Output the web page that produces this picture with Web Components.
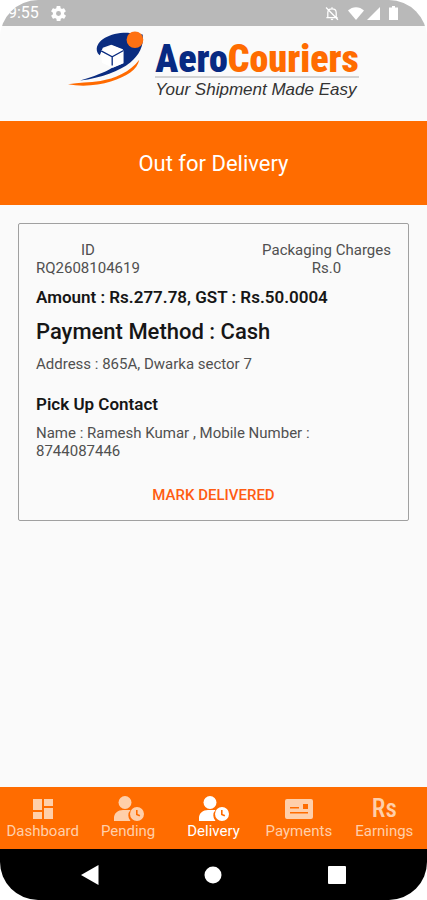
<!DOCTYPE html>
<html lang="en">
<head>
<meta charset="utf-8">
<meta name="viewport" content="width=device-width, initial-scale=1">
<title>AeroCouriers</title>
<style>
  :root {
    --color-accent: #ff6c00;
    --color-bg: #fafafa;
    --color-muted: #505050;
    --color-strong: #161616;
    --spacer: 18px;
  }
  body {
    margin: 0;
    background: #fff;
    font-family: Roboto, "Liberation Sans", sans-serif;
  }
</style>
</head>
<body>
<courier-app></courier-app>
<script>
(() => {
  const css = String.raw;
  const html = String.raw;

  const define = (name, styles, markup) => {
    const template = document.createElement("template");
    template.innerHTML = `<style>${styles}</style>${markup}`;
    customElements.define(name, class extends HTMLElement {
      constructor() {
        super();
        this.attachShadow({ mode: "open" }).appendChild(template.content.cloneNode(true));
      }
    });
  };

  // status bar
  define("status-bar", css`
:host {
  align-items: center;
  background: #b9b9b9;
  box-sizing: border-box;
  color: #fff;
  display: flex;
  font-size: 16px;
  height: 26px;
  justify-content: space-between;
  line-height: 28px;
  padding: 0 28px 0 8px;
}
div {
  align-items: center;
  display: flex;
  gap: 12px;
}
.right {
  gap: 3px;
}
.bell {
  margin-right: 6px;
}
svg {
  display: block;
  fill: currentColor;
}
`, html`
<div>
  <span>9:55</span>
  <svg width="15" height="15" viewBox="2 2 20 20"><path d="M19.4 13a7.5 7.5 0 0 0 0-2l2.1-1.6a.5.5 0 0 0 .1-.6l-2-3.5a.5.5 0 0 0-.6-.2l-2.500 1a7.300 7.300 0 0 0-1.700-1L14.500 2.400a.5.5 0 0 0-.5-.4h-4a.5.5 0 0 0-.5.4l-.4 2.700a7.700 7.700 0 0 0-1.700 1l-2.500-1a.5.5 0 0 0-.6.2l-2 3.500a.5.5 0 0 0 .1.6L4.600 11a8 8 0 0 0 0 2l-2.100 1.600a.5.5 0 0 0-.1.600l2 3.500c.1.200.4.3.6.2l2.500-1c.5.4 1.100.700 1.700 1l.4 2.700c0 .2.2.4.5.4h4c.2 0 .5-.2.500-.4l.4-2.700a7.300 7.300 0 0 0 1.700-1l2.500 1c.2.100.5 0 .6-.2l2-3.500a.5.5 0 0 0-.1-.6zM12 15.300a3.300 3.300 0 1 1 0-6.600 3.300 3.300 0 0 1 0 6.600z"/></svg>
</div>
<div class="right">
  <svg class="bell" width="14" height="15" viewBox="2 2 20 20"><path fill="none" stroke="#fff" stroke-width="1.8" d="M6 17V11c0-3 2.2-5.5 6-5.5s6 2.500 6 5.500v6M4 18h16M12 3v3M3.500 3.500l17 17.500"/><path d="M10 19.500h4a2 2 0 0 1-4 0z"/></svg>
  <svg width="16" height="13" viewBox="0 0 16 13"><path d="M0 3.500C4.500-1 11.500-1 16 3.500L8 13z"/></svg>
  <svg width="13" height="13" viewBox="0 0 13 13"><path d="M13 0v13H0z"/></svg>
  <svg width="16" height="14" viewBox="0 0 16 14"><path d="M9 0h3v1.500h3V14H6V1.500h3z"/></svg>
</div>
`);

  // brand mark, name and tag line
  define("brand-header", css`
:host {
  background: var(--color-bg);
  box-sizing: border-box;
  display: flex;
  gap: 10px;
  height: 95px;
  justify-content: center;
  padding: 4px 0 0;
}
svg {
  display: block;
  flex: none;
  height: 57px;
  width: 77px;
}
.words {
  padding-top: 4px;
}
.name {
  border-bottom: 2px solid #d3d3d3;
  color: #072a82;
  font-family: "Roboto Condensed", Roboto, sans-serif;
  font-size: 38px;
  font-weight: 900;
  height: 42px;
  line-height: 50px;
}
.name b {
  color: var(--color-accent);
  font-weight: 900;
}
.tag {
  color: #333;
  font-family: "Liberation Sans", sans-serif;
  font-size: 17px;
  font-style: italic;
  line-height: 24px;
}
`, html`
<svg viewBox="24 15 230 170" role="img" aria-label="AeroCouriers logo">
  <path fill="#0a2c80" d="M202 23C150 22 108 45 110 75c1 7 4 11 9 15l9-22 25-9 35 13-1 43-31 13c-22 14-55 26-96 38 64-8 118-28 150-54 25-21 42-50 37-84z"/>
  <path fill="#ff6a00" d="M237 104c-26 36-75 57-116 63-34 5-65 4-97 10 40 8 91 4 128-8 48-16 79-35 85-65z"/>
  <path fill="#fff" d="M123 76l34-15 33 14v39l-32 14-33-15z"/>
  <path fill="none" stroke="#0a2c80" stroke-width="4" d="M123 77l33 18 34-19M156 94v27"/>
  <circle cx="224" cy="44" r="25" fill="#ff7112"/>
</svg>
<div class="words">
  <div class="name">Aero<b>Couriers</b></div>
  <div class="tag">Your Shipment Made Easy</div>
</div>
`);

  define("page-banner", css`
:host {
  background: var(--color-accent);
  color: #fff;
  display: block;
  text-align: center;
}
h1 {
  font-size: 22px;
  font-weight: 400;
  line-height: 26px;
  margin: 0;
  padding: 30px var(--spacer) 28px;
}
`, html`<h1><slot></slot></h1>`);

  define("delivery-card", css`
:host {
  border: 1px solid #a0a0a0;
  border-radius: 2px;
  color: var(--color-muted);
  display: flex;
  flex-direction: column;
  font-size: 15px;
  gap: 8px;
  line-height: 18px;
  margin: var(--spacer);
  padding: 17px 17px 7px;
}
.top {
  display: flex;
  justify-content: space-between;
  text-align: center;
}
h2, h3, p {
  margin: 0;
}
h2, h3, .amount {
  color: var(--color-strong);
  font-weight: 500;
}
h2 {
  font-size: 22px;
  line-height: 30px;
}
h3, .amount {
  font-size: 17px;
  font-weight: 600;
  line-height: 24px;
}
h3 {
  margin-top: 11px;
}
button {
  align-self: center;
  background: none;
  border: 0;
  color: #ff5c12;
  font: 500 15px/36px Roboto, sans-serif;
  margin-top: 9px;
  padding: 0 8px;
  text-transform: uppercase;
}
`, html`
<div class="top">
  <div>ID<br><slot name="id"></slot></div>
  <div>Packaging Charges<br><slot name="charges"></slot></div>
</div>
<p class="amount"><slot name="amount"></slot></p>
<h2>Payment Method : <slot name="method"></slot></h2>
<p>Address : <slot name="address"></slot></p>
<h3>Pick Up Contact</h3>
<p><slot name="contact"></slot></p>
<button type="button">Mark Delivered</button>
`);

  define("tab-item", css`
:host {
  color: #ffcfaa;
  display: block;
}
:host([active]) {
  color: #fff;
}
a {
  align-items: center;
  color: inherit;
  display: flex;
  flex-direction: column;
  font-size: 15px;
  line-height: 20px;
  padding: 9px 0 8px;
  text-decoration: none;
}
.icon {
  align-items: center;
  display: flex;
  font-family: "Roboto Condensed", Roboto, sans-serif;
  font-size: 25px;
  font-weight: 500;
  height: 25px;
}
`, html`<a href="#"><span class="icon"><slot name="icon"></slot></span><slot></slot></a>`);

  define("tab-bar", css`
:host {
  background: var(--color-accent);
  display: grid;
  grid-template-columns: repeat(5, 1fr);
}
svg {
  display: block;
  fill: currentColor;
}
`, html`
<tab-item>
  <svg slot="icon" width="20" height="20" viewBox="0 0 20 20"><path d="M0 0h9v11H0zM11 0h9v7h-9zM0 13h9v7H0zM11 9h9v11h-9z"/></svg>
  Dashboard
</tab-item>
<tab-item>
  <svg slot="icon" width="32" height="25" viewBox="-2 0 32 25"><circle cx="11" cy="6.5" r="6.5"/><path d="M0 25v-3c0-5 4-8 9-8h7.500a8 8 0 0 0 0 11z"/><path fill-rule="evenodd" d="M23 11a7 7 0 1 0 0 14 7 7 0 0 0 0-14zm-1 3v5l3.500 1.500.7-1.400-2.600-1.200V14z"/></svg>
  Pending
</tab-item>
<tab-item active>
  <svg slot="icon" width="32" height="25" viewBox="-2 0 32 25"><circle cx="11" cy="6.5" r="6.5"/><path d="M0 25v-3c0-5 4-8 9-8h7.500a8 8 0 0 0 0 11z"/><path fill-rule="evenodd" d="M23 11a7 7 0 1 0 0 14 7 7 0 0 0 0-14zm-1 3v5l3.500 1.500.7-1.400-2.600-1.200V14z"/></svg>
  Delivery
</tab-item>
<tab-item>
  <svg slot="icon" width="28" height="20" viewBox="0 0 28 20"><path fill-rule="evenodd" d="M2 0h24a2 2 0 0 1 2 2v16a2 2 0 0 1-2 2H2a2 2 0 0 1-2-2V2a2 2 0 0 1 2-2zm3 8v1.500h9V8zm0 5v1.500h18V13zM18 5v5h5V5z"/></svg>
  Payments
</tab-item>
<tab-item>
  <span slot="icon">Rs</span>
  Earnings
</tab-item>
`);

  define("system-nav", css`
:host {
  background: #000;
  display: grid;
  grid-template-columns: repeat(3, 1fr);
  padding: 0 28px;
}
button {
  background: none;
  border: 0;
  display: grid;
  height: 51px;
  padding: 0;
  place-items: center;
}
svg {
  fill: #fff;
}
`, html`
<button type="button" aria-label="Back"><svg width="18" height="20" viewBox="0 0 18 20"><path d="M17.5 0v20L0 10z"/></svg></button>
<button type="button" aria-label="Home"><svg width="18" height="18"><circle cx="9" cy="9" r="8.5"/></svg></button>
<button type="button" aria-label="Recent apps"><svg width="18" height="18"><rect width="18" height="18" rx="1"/></svg></button>
`);

  define("courier-app", css`
:host {
  background: var(--color-bg);
  border-radius: 38px;
  display: flex;
  flex-direction: column;
  min-height: 100vh;
  overflow: hidden;
}
main {
  flex: 1;
}
`, html`
<status-bar></status-bar>
<brand-header></brand-header>
<page-banner>Out for Delivery</page-banner>
<main>
  <delivery-card>
    <span slot="id">RQ2608104619</span>
    <span slot="charges">Rs.0</span>
    <span slot="amount">Amount : Rs.277.78, GST : Rs.50.0004</span>
    <span slot="method">Cash</span>
    <span slot="address">865A, Dwarka sector 7</span>
    <span slot="contact">Name : Ramesh Kumar , Mobile Number : 8744087446</span>
  </delivery-card>
</main>
<tab-bar></tab-bar>
<system-nav></system-nav>
`);
})();
</script>
</body>
</html>
